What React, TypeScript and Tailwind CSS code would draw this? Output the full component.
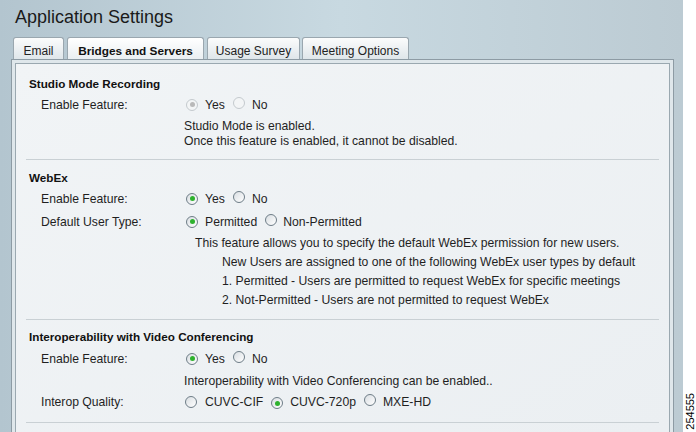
import React from "react";

function Radio({ checked = false, disabled = false }: { checked?: boolean; disabled?: boolean }) {
  return (
    <span
      className={
        disabled
          ? "inline-flex w-[12px] h-[12px] shrink-0 rounded-full border border-[#c4cace] bg-[#f3f5f6] items-center justify-center"
          : "inline-flex w-[12px] h-[12px] shrink-0 rounded-full border border-[#6e7d87] bg-gradient-to-br from-[#d9dee2] to-white items-center justify-center"
      }
    >
      {checked && (
        <span
          className={
            disabled
              ? "w-[5px] h-[5px] rounded-full bg-[#b9b9b9]"
              : "w-[5px] h-[5px] rounded-full bg-[#2eb22e]"
          }
        />
      )}
    </span>
  );
}

function Row({
  label,
  children,
  className = "",
}: {
  label?: string;
  children?: React.ReactNode;
  className?: string;
}) {
  return (
    <div className={"flex h-[20px] items-center " + className}>
      <div className="w-[170px] shrink-0 pl-[25px]">{label}</div>
      <div className="flex items-center">{children}</div>
    </div>
  );
}

function Heading({ children, className = "" }: { children: React.ReactNode; className?: string }) {
  return (
    <div className={"flex h-[20px] items-center pl-[13px] font-bold text-[11.7px] text-[#111] " + className}>
      {children}
    </div>
  );
}

function Sep({ className = "" }: { className?: string }) {
  return <div className={"ml-[10px] mr-[10px] h-px bg-[#c9d0d4] " + className} />;
}

export default function App() {
  return (
    <div className="flex w-[696px] h-[432px] overflow-hidden font-['Liberation_Sans',Arial,sans-serif] text-[12.2px] text-[#1f1f1f]">
      <div className="w-[683px] h-full bg-gradient-to-r from-[#b3c5cf] via-[#c8d9e1] to-[#bccbd3] pl-[11px] flex flex-col">
        <div className="h-[22px] mt-[6px] pl-[4px] text-[18px] leading-[22px] text-[#1a1a1a]">
          Application Settings
        </div>
        <div className="flex mt-[9px] ml-[2px] h-[22px]">
          <div className="w-[51px] h-[22px] pt-[5px] leading-[16px] text-[12px] text-center border border-b-0 border-[#9aa7af] rounded-t-[3px] bg-gradient-to-b from-[#fbfcfc] to-[#dfe6ea] text-[#222]">
            Email
          </div>
          <div className="ml-[3px] w-[137px] h-[22px] pt-[5px] leading-[16px] text-[11.8px] font-bold text-center border border-b-0 border-[#9aa7af] rounded-t-[3px] bg-gradient-to-b from-[#ffffff] to-[#eaeff2] text-[#111]">
            Bridges and Servers
          </div>
          <div className="ml-[3px] w-[93px] h-[22px] pt-[5px] leading-[16px] text-[12px] text-center border border-b-0 border-[#9aa7af] rounded-t-[3px] bg-gradient-to-b from-[#fbfcfc] to-[#dfe6ea] text-[#222]">
            Usage Survey
          </div>
          <div className="ml-[2px] w-[107px] h-[22px] pt-[5px] leading-[16px] text-[12px] text-center border border-b-0 border-[#9aa7af] rounded-t-[3px] bg-gradient-to-b from-[#fbfcfc] to-[#dfe6ea] text-[#222]">
            Meeting Options
          </div>
        </div>
        <div className="w-[663px] flex-1 border border-b-0 border-[#8d9ba4] bg-[#dfe7eb] pt-[3px] px-[3px] flex flex-col">
          <div className="flex-1 border border-b-0 border-[#9aa8b0] bg-gradient-to-br from-[#f1f4f6] to-[#ebeff2] pt-[10px]">
            {/* Studio Mode Recording */}
            <Heading>Studio Mode Recording</Heading>
            <Row label="Enable Feature:" className="mt-[1px]">
              <Radio checked disabled />
              <span className="ml-[7px]">Yes</span>
              <span className="ml-[8px]">
                <Radio disabled />
              </span>
              <span className="ml-[7px]">No</span>
            </Row>
            <div className="mt-[4px] pl-[168px] h-[15px] leading-[15px]">Studio Mode is enabled.</div>
            <div className="pl-[168px] h-[15px] leading-[15px]">
              Once this feature is enabled, it cannot be disabled.
            </div>
            <Sep className="mt-[10px]" />

            {/* WebEx */}
            <Heading className="mt-[8px]">WebEx</Heading>
            <Row label="Enable Feature:" className="mt-[1px]">
              <Radio checked />
              <span className="ml-[7px]">Yes</span>
              <span className="ml-[8px]">
                <Radio />
              </span>
              <span className="ml-[7px]">No</span>
            </Row>
            <Row label="Default User Type:" className="mt-[3px]">
              <Radio checked />
              <span className="ml-[7px]">Permitted</span>
              <span className="ml-[8px]">
                <Radio />
              </span>
              <span className="ml-[6px]">Non-Permitted</span>
            </Row>
            <div className="mt-[2px]">
              <div className="h-[19px] leading-[19px] pl-[179px]">
                This feature allows you to specify the default WebEx permission for new users.
              </div>
              <div className="h-[19px] leading-[19px] pl-[206px]">
                New Users are assigned to one of the following WebEx user types by default
              </div>
              <div className="h-[19px] leading-[19px] pl-[206px]">
                1. Permitted - Users are permitted to request WebEx for specific meetings
              </div>
              <div className="h-[19px] leading-[19px] pl-[206px]">
                2. Not-Permitted - Users are not permitted to request WebEx
              </div>
            </div>
            <Sep className="mt-[9px]" />

            {/* Interop */}
            <Heading className="mt-[7px]">Interoperability with Video Conferencing</Heading>
            <Row label="Enable Feature:" className="mt-[2px]">
              <Radio checked />
              <span className="ml-[7px]">Yes</span>
              <span className="ml-[8px]">
                <Radio />
              </span>
              <span className="ml-[7px]">No</span>
            </Row>
            <div className="mt-[2px] h-[20px] flex items-center pl-[168px]">
              Interoperability with Video Conferencing can be enabled..
            </div>
            <div className="mt-[1px] flex h-[20px] items-center">
              <div className="w-[169px] shrink-0 pl-[25px]">Interop Quality:</div>
              <Radio />
              <span className="ml-[8px]">CUVC-CIF</span>
              <span className="ml-[8px]">
                <Radio checked />
              </span>
              <span className="ml-[7px]">CUVC-720p</span>
              <span className="ml-[8px]">
                <Radio />
              </span>
              <span className="ml-[7px]">MXE-HD</span>
            </div>
            <Sep className="mt-[10px]" />
          </div>
        </div>
      </div>
      <div className="w-[13px] h-full bg-white flex flex-col justify-end items-center pb-[2px]">
        <span className="[writing-mode:vertical-rl] rotate-180 text-[11px] leading-[12px] text-black">
          254555
        </span>
      </div>
    </div>
  );
}
